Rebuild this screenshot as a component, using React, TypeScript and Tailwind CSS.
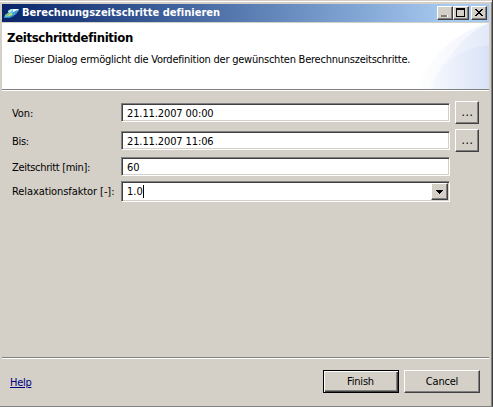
import type { ReactNode } from 'react';

const raised =
  'bg-[#d4d0c8] border border-t-white border-l-white border-r-[#404040] border-b-[#404040] shadow-[inset_-1px_-1px_0_#808080]';
const sunken =
  'bg-white border border-t-[#808080] border-l-[#808080] border-r-white border-b-white shadow-[inset_1px_1px_0_#404040,inset_-1px_-1px_0_#d4d0c8]';

function Field({ label, value, tracking = 'tracking-[-0.1px]' }: { label: string; value: string; tracking?: string }) {
  return (
    <>
      <label className={`w-[109px] shrink-0 pt-[3px] ${tracking}`}>{label}</label>
      <div className={`h-[19px] w-[329px] shrink-0 pl-[5px] leading-[19px] tracking-[-0.11px] ${sunken}`}>{value}</div>
    </>
  );
}

function BrowseButton() {
  return (
    <button className={`ml-[5px] h-[23px] w-6 shrink-0 pl-px text-[12px] leading-[21px] tracking-[0.6px] ${raised}`}>...</button>
  );
}

function CaptionButton({ children, className = '' }: { children: ReactNode; className?: string }) {
  return (
    <button className={`h-[14px] w-4 shrink-0 ${raised} ${className}`}>
      <svg className="block h-3 w-[14px]" viewBox="0 0 14 12" shapeRendering="crispEdges">
        {children}
      </svg>
    </button>
  );
}

function AppIcon() {
  return (
    <svg className="h-4 w-4 shrink-0" viewBox="0 0 16 16">
      <path d="M4 6L7 4H14L15 5L12 9L9 11L4 13H0L1 10L5 7Z" fill="#55b8e4" />
      <path d="M4 6L7 4H10L8 6L6 8L4 7Z" fill="#a9e6f6" />
      <path d="M9 4H15L12 7H9Z" fill="#effcff" />
      <path d="M11 6L14 5L12 9L9 10L9 8Z" fill="#399bd0" />
      <path d="M1 10L5 8H8L6 11L2 12Z" fill="#78c98a" />
      <path d="M4 10L8 8L8 10L5 11Z" fill="#c8dc63" />
      <path d="M0 12L5 12L9 10L10 11L6 13H1Z" fill="#2686c9" />
    </svg>
  );
}

export default function App() {
  return (
    <div className="flex h-[407px] w-[493px] flex-col overflow-hidden border-r border-b border-r-[#404040] border-b-[#808080] bg-[#d4d0c8] pt-1 pl-[2px] font-['DejaVu_Sans_Condensed','DejaVu_Sans',sans-serif] text-[11px] whitespace-nowrap text-black shadow-[inset_0_1px_0_#d4d0c8,inset_0_2px_0_#fff,inset_-1px_0_0_#808080] [font-stretch:condensed]">
      <header className="flex h-[18px] w-[487px] shrink-0 items-center bg-linear-to-r from-[#0a246a] to-[#a6caf0] to-92% pr-[2px] pl-[2px]">
        <AppIcon />
        <h1 className="ml-[2px] flex-1 leading-[18px] font-bold tracking-[0.02px] text-white">Berechnungszeitschritte definieren</h1>
        <CaptionButton><path d="M3 8h6v2H3z" fill="#808080" /><path d="M4 10h6V8H9v2H4z" fill="white" /></CaptionButton>
        <CaptionButton><path d="M2 1h9v9H2zM3 3v6h7V3z" fillRule="evenodd" /></CaptionButton>
        <CaptionButton className="ml-[2px]"><path d="M3 2h2v1h1v1h2V3h1V2h2v1h-1v1H9v1H8v1h1v1h1v1h1v1H9V8H8V7H6v1H5v1H3V8h1V7h1V6h1V5H5V4H4V3H3z" fill="black" /></CaptionButton>
      </header>

      <section className="mt-px flex h-[66px] w-[487px] shrink-0 justify-between bg-white">
        <div className="min-w-0 flex-1 pt-[6px] pl-[5px]">
          <h2 className="text-[13px] leading-[18px] font-bold tracking-[-0.33px]">Zeitschrittdefinition</h2>
          <p className="pt-[5px] pl-[7px] leading-[16px] tracking-[-0.235px]">Dieser Dialog ermöglicht die Vordefinition der gewünschten Berechnunszeitschritte.</p>
        </div>
        <svg className="h-[66px] w-[75px] shrink-0" viewBox="0 0 75 66">
          <defs>
            <linearGradient id="outer" x1="0" x2="1"><stop stopColor="#fff" /><stop offset="1" stopColor="#e2e9f8" /></linearGradient>
            <linearGradient id="inner" x1="0" x2="1"><stop stopColor="#f7f9fe" /><stop offset="1" stopColor="#d9e2f6" /></linearGradient>
          </defs>
          <path d="M0 66Q25 14 75 0V66Z" fill="url(#outer)" />
          <path d="M35 35Q50 12 75 0Q24 14 0 66H16Q24 45 35 35Z" fill="white" opacity=".45" />
          <path d="M16 66Q31 27 75 22V66Z" fill="url(#inner)" />
        </svg>
      </section>
      <div className="h-[2px] w-[487px] shrink-0 border-t border-b border-t-[#808080] border-b-white" />

      <main className="flex h-[266px] shrink-0 flex-col pt-[10px] pl-[10px]">
        <div className="flex h-[23px] items-center">
          <Field label="Von:" value="21.11.2007 00:00" />
          <BrowseButton />
        </div>
        <div className="mt-[5px] flex h-[23px] items-center">
          <Field label="Bis:" value="21.11.2007 11:06" tracking="tracking-[-0.3px]" />
          <BrowseButton />
        </div>
        <div className="mt-[5px] flex h-[19px] items-center">
          <Field label="Zeitschritt [min]:" value="60" tracking="tracking-[-0.32px]" />
        </div>
        <div className="mt-[5px] flex h-[21px] items-center">
          <label className="w-[109px] shrink-0 pt-px tracking-[-0.09px]">Relaxationsfaktor [-]:</label>
          <div className={`flex h-[21px] w-[329px] items-center justify-between pr-px pl-[5px] ${sunken}`}>
            <span className="border-r border-black leading-[13px]">1.0</span>
            <button className={`flex h-[17px] w-[17px] items-center justify-center ${raised}`}>
              <svg className="h-1 w-[7px]" viewBox="0 0 7 4" shapeRendering="crispEdges"><path d="M0 0h7v1H6v1H5v1H4v1H3V3H2V2H1V1H0z" /></svg>
            </button>
          </div>
        </div>
      </main>

      <div className="h-[2px] w-[487px] shrink-0 border-t border-b border-t-[#808080] border-b-white" />
      <footer className="flex shrink-0 items-center pt-[11px] pl-[8px]">
        <a className="w-[313px] pt-[3px] tracking-[-0.3px] text-[#000080] underline underline-offset-1">Help</a>
        <button className="h-[23px] w-[76px] border border-black bg-[#d4d0c8] pt-px pr-px tracking-[-0.2px] shadow-[inset_1px_1px_0_#fff,inset_-1px_-1px_0_#404040,inset_-2px_-2px_0_#808080]">Finish</button>
        <button className={`ml-[5px] h-[23px] w-[76px] pt-px tracking-[-0.2px] ${raised}`}>Cancel</button>
      </footer>
    </div>
  );
}
